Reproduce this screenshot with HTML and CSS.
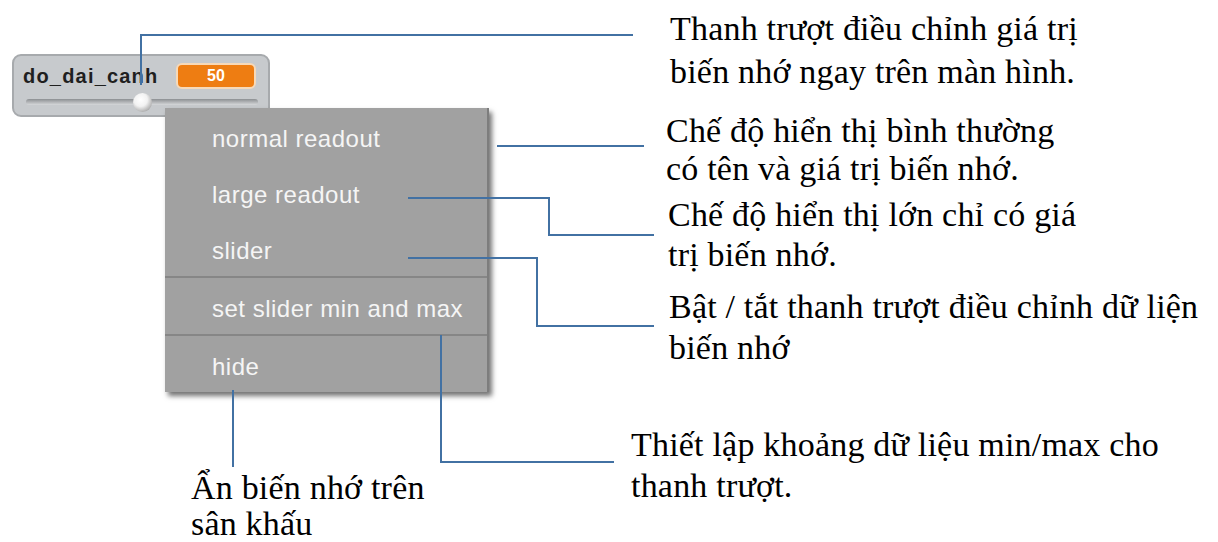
FILE: index.html
```html
<!DOCTYPE html>
<html lang="vi">
<head>
  <meta charset="UTF-8">
  <title>Biến nhớ - menu</title>
  <link rel="stylesheet" href="styles.css">
</head>
<body>

  <div class="canvas">

    <div class="monitor">
      <div class="monitor-row">
        <span class="var-name">do_dai_canh</span>
        <span class="var-value">50</span>
      </div>
      <div class="slider">
        <div class="slider-knob"></div>
      </div>
    </div>

    <ul class="menu">
      <li>normal readout</li>
      <li>large readout</li>
      <li>slider</li>
      <li class="sep">set slider min and max</li>
      <li class="sep">hide</li>
    </ul>

    <svg class="wires" width="1218" height="542" viewBox="0 0 1218 542">
      <polyline points="141,85 141,35 633,35" />
      <polyline points="497,146 644,146" />
      <polyline points="408,198 549,198 549,235 654,235" />
      <polyline points="408,258 537,258 537,326 654,326" />
      <polyline points="441,335 441,462 614,462" />
      <polyline points="233,390 233,467" />
    </svg>

    <p class="note note-1">Thanh trượt điều chỉnh giá trị<br>biến nhớ ngay trên màn hình.</p>
    <p class="note note-2">Chế độ hiển thị bình thường<br>có tên và giá trị biến nhớ.</p>
    <p class="note note-3">Chế độ hiển thị lớn chỉ có giá<br>trị biến nhớ.</p>
    <p class="note note-4">Bật / tắt thanh trượt điều chỉnh dữ liện<br>biến nhớ</p>
    <p class="note note-5">Thiết lập khoảng dữ liệu min/max cho<br>thanh trượt.</p>
    <p class="note note-6">Ẩn biến nhớ trên<br>sân khấu</p>

  </div>

</body>
</html>
```

FILE: styles.css
```css
body {
  margin: 0;
  background-color: #ffffff;
  font-family: "Liberation Serif", "Times New Roman", serif;
}

.canvas {
  position: relative;
  width: 1218px;
  height: 542px;
  overflow: hidden;
}

/* khung biến nhớ */
.monitor {
  position: absolute;
  left: 12px;
  top: 54px;
  width: 258px;
  height: 63px;
  box-sizing: border-box;
  padding: 7px 12px 0 9px;
  background-color: #c7cacd;
  border: 2px solid #a7aaad;
  border-radius: 9px;
}

.monitor-row {
  display: flex;
  align-items: center;
  justify-content: space-between;
}

.var-name {
  font-family: "Liberation Sans", Arial, sans-serif;
  font-weight: bold;
  font-size: 20px;
  letter-spacing: 1.2px;
  color: #1f1f1f;
}

.var-value {
  width: 76px;
  height: 22px;
  line-height: 22px;
  text-align: center;
  font-family: "Liberation Sans", Arial, sans-serif;
  font-weight: bold;
  font-size: 16px;
  color: #ffffff;
  background-color: #ee7d12;
  border: 2px solid #f7d9b8;
  border-radius: 6px;
}

.slider {
  position: relative;
  margin-top: 10px;
  margin-left: 3px;
  width: 232px;
  height: 6px;
  border-radius: 3px;
  background: linear-gradient(#8c8f92, #d6d8da);
}

.slider-knob {
  position: absolute;
  left: 107px;
  top: -6px;
  width: 19px;
  height: 19px;
  border-radius: 50%;
  background: radial-gradient(circle at 40% 35%, #ffffff 0%, #f2f2f2 40%, #9a9a9a 85%, #555555 100%);
}

/* menu chuột phải */
.menu {
  position: absolute;
  left: 165px;
  top: 108px;
  width: 322px;
  margin: 0;
  padding: 0;
  list-style: none;
  background-color: #a1a1a1;
  border-right: 2px solid #7d7d7d;
  box-shadow: 3px 4px 5px rgba(0, 0, 0, 0.55);
}

.menu li {
  height: 53px;
  padding-top: 3px;
  line-height: 56px;
  padding-left: 47px;
  font-family: "Liberation Sans", Arial, sans-serif;
  font-size: 24px;
  letter-spacing: 0.5px;
  color: #f5f5f5;
}

.menu li.sep {
  border-top: 2px solid #868686;
}

/* đường chỉ dẫn */
.wires {
  position: absolute;
  left: 0;
  top: 0;
  pointer-events: none;
}

.wires polyline {
  fill: none;
  stroke: #4271a3;
  stroke-width: 2;
}

/* chú thích */
.note {
  position: absolute;
  margin: 0;
  font-size: 34px;
  letter-spacing: 0.2px;
  line-height: 41px;
  color: #000000;
  white-space: nowrap;
}

.note-1 { left: 670px; top: 7px; line-height: 43px; }
.note-2 { left: 666px; top: 112px; line-height: 38px; }
.note-3 { left: 668px; top: 195px; line-height: 40px; }
.note-4 { left: 669px; top: 286px; }
.note-5 { left: 631px; top: 424px; }
.note-6 { left: 191px; top: 470px; line-height: 36px; }
```
